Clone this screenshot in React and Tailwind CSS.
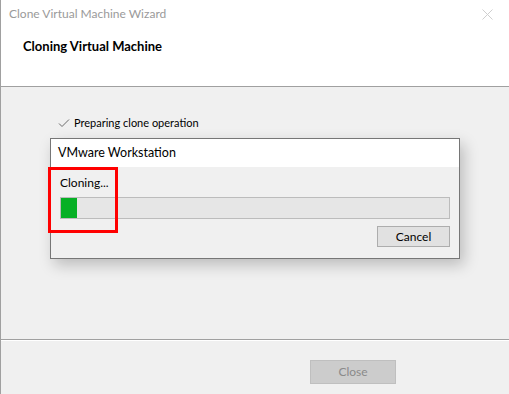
import { useState } from "react";

const font = { fontFamily: 'Lato, "Noto Sans", sans-serif' };

function CheckIcon() {
  return (
    <svg width="12" height="10" viewBox="0 0 12 10" className="mr-[4px]">
      <path d="M1 5.5 L4 8.5 L11 1.5" fill="none" stroke="#6b6b6b" strokeWidth="1" />
    </svg>
  );
}

function CloneDialog({ progress }) {
  return (
    <div className="absolute left-[49px] top-[138px] w-[410px] border border-[#767676] bg-[#f0f0f0] shadow-[4px_6px_14px_rgba(0,0,0,0.22)]">
      {/* Title */}
      <div className="flex h-[28px] items-center bg-white pl-[7px] text-[12.5px] text-black">
        VMware Workstation
      </div>
      {/* Body */}
      <div className="flex flex-col px-[9px] pb-[11px] pt-[8px]">
        <p className="text-[12px] leading-[16px] text-black">Cloning...</p>
        <div className="mt-[6px] h-[22px] w-full border border-[#bcbcbc] bg-[#e6e6e6]">
          <div className="h-full bg-[#06b025]" style={{ width: `${progress}%` }} />
        </div>
        <div className="mt-[7px] flex justify-end">
          <button className="h-[21px] w-[73px] border border-[#adadad] bg-[#e1e1e1] text-[12px] text-black">
            Cancel
          </button>
        </div>
      </div>
    </div>
  );
}

export default function App() {
  const [progress] = useState(4.1);

  return (
    <div className="relative h-[394px] w-[509px] overflow-hidden border-l border-[#a0a0a0] bg-[#f0f0f0]" style={font}>
      {/* Header */}
      <div className="h-[87px] border-b border-[#a0a0a0] bg-white">
        <div className="flex h-[28px] items-center justify-between pl-[8px] pr-[16px]">
          <span className="text-[12px] text-[#9a9a9a]">Clone Virtual Machine Wizard</span>
          <svg width="11" height="11" viewBox="0 0 11 11">
            <path d="M0.5 0.5 L10.5 10.5 M10.5 0.5 L0.5 10.5" stroke="#cfcfcf" strokeWidth="1" />
          </svg>
        </div>
        <h2 className="pl-[22px] pt-[9px] text-[13px] font-bold text-black">Cloning Virtual Machine</h2>
      </div>

      {/* Body */}
      <div className="h-[253px] border-b border-[#a0a0a0] pl-[57px] pt-[28px]">
        <div className="flex items-center text-[11px] text-black">
          <CheckIcon />
          Preparing clone operation
        </div>
      </div>

      {/* Footer */}
      <div className="flex justify-end border-t border-white pr-[113px] pt-[19px]">
        <button className="h-[24px] w-[86px] border border-[#bfbfbf] bg-[#cccccc] text-[12px] text-[#8a8a8a]">
          Close
        </button>
      </div>

      <CloneDialog progress={progress} />

      {/* Highlight box */}
      <div className="pointer-events-none absolute left-[47px] top-[167px] h-[66px] w-[70px] border-[3px] border-[#ff0000]" />
    </div>
  );
}
